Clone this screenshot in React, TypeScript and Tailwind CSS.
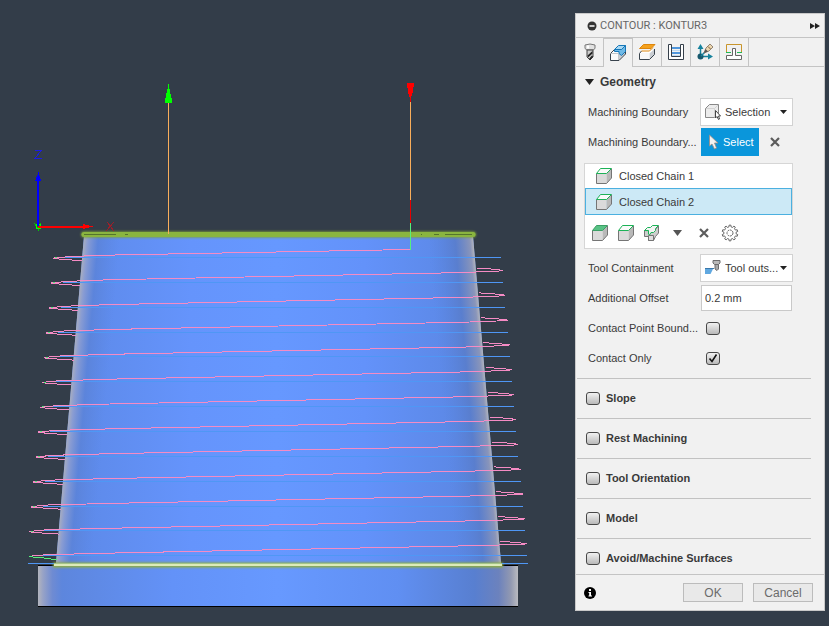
import { useState, type ReactNode } from "react"
import clsx from "clsx"

/* ---------- viewport ---------- */

const PASS_TIPS = [53, 51, 49, 46, 44, 42, 40, 38, 36, 33, 31, 29, 29]
const PASS_STEP = 24.85

const wallLeft = (y: number) => 84 - ((y - 236) * 28) / 326
const wallRight = (y: number) => 473 + ((y - 236) * 28) / 326

function Pass({ index, tip }: { index: number; tip: number }) {
  const y = 257.5 + index * PASS_STEP
  const right = 501 + index * 2.17
  const first = index === 0
  const last = index === PASS_TIPS.length - 1
  const across = first
    ? `M${tip} ${y + 0.6} L${tip + 17} ${y - 1} L110 ${y - 2.4} L410 249.5`
    : `M${tip} ${y + 0.6} L${tip + 17} ${y - 1} L110 ${y - 2.6} L463 ${y - 9.8} L${right - 4} ${y - 11.3} L${right} ${y - 12} L${right - 10} ${y - 13.2} L${wallRight(y)} ${y - 14.3}`
  return (
    <g fill="none" strokeWidth="1">
      <path d={`M${tip + 12} ${y} H${right}`} stroke="#4f97f5" />
      <path d={across} stroke="#f58bc4" />
      <path
        d={`M${tip} ${y + 1} L${tip + 14} ${y + 2.2} L${wallLeft(y)} ${y + (last ? 4 : 3.2)}`}
        stroke={last ? "#56f07c" : "#f58bc4"}
      />
      <path d={`M${tip + 2} ${y + 0.3} h2`} stroke="#56f07c" />
    </g>
  )
}

function Viewport() {
  return (
    <svg viewBox="0 0 575 626" className="block w-full" role="img" aria-label="Toolpath preview">
      <defs>
        <linearGradient id="body" gradientUnits="userSpaceOnUse" x1="60" y1="0" x2="495" y2="0">
          <stop offset="0" stopColor="#5c88e6" />
          <stop offset=".3" stopColor="#6594fc" />
          <stop offset=".5" stopColor="#6698ff" />
          <stop offset=".7" stopColor="#6392fa" />
          <stop offset="1" stopColor="#5984dd" />
        </linearGradient>
        <linearGradient id="edgeLeft" gradientUnits="userSpaceOnUse" x1="84" y1="236" x2="120" y2="239.1">
          <stop offset="0" stopColor="#a9aebf" />
          <stop offset=".12" stopColor="#8e9ed0" stopOpacity=".9" />
          <stop offset=".4" stopColor="#5b82d6" stopOpacity=".75" />
          <stop offset="1" stopColor="#5b86e0" stopOpacity="0" />
        </linearGradient>
        <linearGradient id="edgeRight" gradientUnits="userSpaceOnUse" x1="473" y1="236" x2="428" y2="239.9">
          <stop offset="0" stopColor="#b4b6bd" />
          <stop offset=".08" stopColor="#8c96b8" stopOpacity=".95" />
          <stop offset=".4" stopColor="#597cc9" stopOpacity=".8" />
          <stop offset="1" stopColor="#5984dd" stopOpacity="0" />
        </linearGradient>
        <linearGradient id="base" gradientUnits="userSpaceOnUse" x1="38" y1="0" x2="518" y2="0">
          <stop offset="0" stopColor="#b3b5bd" />
          <stop offset=".01" stopColor="#98a3c6" />
          <stop offset=".03" stopColor="#6f8bd2" />
          <stop offset=".05" stopColor="#5d86dd" />
          <stop offset=".28" stopColor="#6392f8" />
          <stop offset=".5" stopColor="#6799ff" />
          <stop offset=".75" stopColor="#608ff2" />
          <stop offset=".91" stopColor="#587fd0" />
          <stop offset=".96" stopColor="#6c82bd" />
          <stop offset=".985" stopColor="#9299b1" />
          <stop offset="1" stopColor="#babbc0" />
        </linearGradient>
        {/* user space units, a flat line has an empty bounding box */}
        <filter id="glow" filterUnits="userSpaceOnUse" x="20" y="220" width="520" height="360">
          <feGaussianBlur stdDeviation="1" />
        </filter>
      </defs>

      <rect x="38" y="566" width="480" height="40" fill="url(#base)" />
      <path d="M38 565.5 H518 M38 606.5 H518" stroke="#000" shapeRendering="crispEdges" />

      <g>
        <path d="M84 236 H473 L501 563 H56 Z" fill="url(#body)" />
        <path d="M84 236 H473 L501 563 H56 Z" fill="url(#edgeLeft)" />
        <path d="M84 236 H473 L501 563 H56 Z" fill="url(#edgeRight)" />
      </g>

      <g shapeRendering="crispEdges">
        {PASS_TIPS.map((tip, i) => (
          <Pass key={i} index={i} tip={tip} />
        ))}
      </g>

      {/* selected chains */}
      <path d="M84 234.5 H473" stroke="#7c9f3a" strokeWidth="6" strokeLinecap="round" filter="url(#glow)" />
      <path d="M84 234.5 H473" stroke="#8ab53f" strokeWidth="5" strokeLinecap="round" />
      <path
        d="M84 234.5 H116 M125 234.5 H128 M421 234.5 H422 M434 234.5 H439 M445 234.5 H472"
        stroke="#55742c"
        shapeRendering="crispEdges"
      />
      <path d="M53 565 H503" stroke="#8fae3c" strokeWidth="5" filter="url(#glow)" />
      <path d="M28 563.5 H528" stroke="#4f97f5" shapeRendering="crispEdges" />
      <path d="M54 563.5 H502" stroke="#a3c486" shapeRendering="crispEdges" />
      <path d="M54 565 H502" stroke="#dcebb8" strokeWidth="2" />

      {/* lead in and lead out */}
      <g shapeRendering="crispEdges">
        <path d="M168.5 102 V234" stroke="#f9ae5b" />
        <path d="M168.5 84 L172.5 103 H164.5 Z" fill="#0f0" />
        <path d="M410.5 101 V200" stroke="#f9ae5b" />
        <path d="M410.5 96 V102 M410.5 200 V223" stroke="#e80000" />
        <path d="M410.5 223 V250" stroke="#56f07c" />
        <path d="M407 83 H414 L413 92 L411 98 H410 L408 92 Z" fill="#f00" />
      </g>

      {/* origin triad */}
      <g shapeRendering="crispEdges" fill="none">
        <path d="M34 223 L38 228 M41 223 L38 228 V231" stroke="#0c0" />
        <rect x="36.500" y="224.500" width="4" height="4" stroke="#0f0" />
        <path d="M38 227 H86" stroke="red" strokeWidth="2" />
        <path d="M83 224 L93 226.500 L83 229 Z" fill="red" />
        <path d="M38 178 V226" stroke="#00f" strokeWidth="2" />
        <path d="M38.500 172 L41 181 H35 Z" fill="#00f" />
        <path d="M35 150.500 H41 L35 158.500 H42" stroke="#1c1ce0" />
        <path d="M107 222 L114 231 M114 222 L106 231" stroke="#9c1f29" />
      </g>
    </svg>
  )
}

/* ---------- icons ---------- */

function ToolIcon() {
  return (
    <svg width="16" height="20" viewBox="0 0 16 20" aria-hidden>
      <path d="M3 3 Q8 1 13 3 V6.500 L11 8 H5 L3 6.500 Z" fill="#e2e2e2" stroke="#777" />
      <path d="M5 8 H11 V15 L8 18 L5 15 Z" fill="#ccc" stroke="#444" />
      <path d="M5.500 13.500 L10.500 9 V11.500 L6 15.500 Z" fill="#222" />
      <path d="M7.500 17.500 L10.500 14" stroke="#222" strokeWidth="1.500" />
      <path d="M6 3.500 V6.500" stroke="#fff" strokeWidth="2" />
    </svg>
  )
}

function GeometryIcon() {
  return (
    <svg width="18" height="18" viewBox="0 0 18 18" aria-hidden>
      <path d="M1.500 9.500 L5.500 5.500 H12 V9.500 L9.500 16.500 H1.500 Z" fill="#fafafa" />
      <path d="M9.500 16.500 V10 L13 9 L16.500 5 V10 Z" fill="#c9cdd2" />
      <path d="M1.500 9.500 L5.500 5.500 M1.500 9.500 V16.500 H10 L16.500 10 V2" fill="none" stroke="#39434d" />
      <path d="M1.500 9.500 H9.500 V16" fill="none" stroke="#c2c6ca" />
      <path d="M5.500 5.500 L9.500 1.500 H16.500 L12.500 5.500 Z" fill="#a9d8f3" stroke="#1677b8" />
      <path d="M12.500 5.500 L16.500 1.500 V7.500 L12.500 11.500 L10 9.500 V7.500 H5.500 V5.500 Z" fill="#6fb9e6" stroke="#1677b8" />
    </svg>
  )
}

function HeightsIcon() {
  return (
    <svg width="18" height="18" viewBox="0 0 18 18" aria-hidden>
      <path d="M1.500 10.500 L5 7 H16.500 L11.500 10.500 Z" fill="#fff" />
      <path d="M11.500 16.500 V10.500 L16.500 6 V11.500 Z" fill="#c9cdd2" />
      <path d="M1.500 10.500 H11.500 V16.500 H1.500 Z" fill="#f8f8f8" />
      <path d="M3.500 8 L1.500 10.500 V16.500 H11.500 L16.500 11.500 V6" fill="none" stroke="#39434d" />
      <path d="M5.500 1.500 H17 L13 5.500 H1.500 Z" fill="#f5a11d" stroke="#dd860c" />
      <path d="M3.500 8 H11.500 L15 4.500" fill="none" stroke="#dd860c" />
    </svg>
  )
}

function PassesIcon() {
  return (
    <svg width="18" height="18" viewBox="0 0 18 18" aria-hidden>
      <path d="M1.500 1.500 H4.500 V13.500 H13.500 V1.500 H16.500 V16.500 H1.500 Z" fill="#fff" stroke="#353f4a" />
      <path d="M5 5 H13 M5 10 H13" stroke="#4f96dc" strokeWidth="2" />
      <path d="M5 7.500 H13 M5 12.500 H13" stroke="#bcd9f3" />
    </svg>
  )
}

function LinkingIcon() {
  return (
    <svg width="18" height="18" viewBox="0 0 18 18" aria-hidden>
      <path d="M4.500 5 V13.500 H13" fill="none" stroke="#16829d" strokeWidth="1.500" />
      <path d="M4.500 1 L7.500 6 H1.500 Z M17 13.500 L12 10.500 V16.500 Z" fill="#16829d" />
      <circle cx="4.500" cy="13.500" r="3" fill="#16586d" />
      <path d="M5 13 L10 8" stroke="#16829d" strokeWidth="1.500" />
      <path d="M8 10 L10 5 L14 1 L17 4 L13 8 Z" fill="#ecd6b0" stroke="#7b6c58" strokeWidth=".8" />
      <path d="M8 10 L9.500 6 L12 8.500 Z" fill="#555" />
      <path d="M12 3.500 L14.500 6" stroke="#7a5c35" />
    </svg>
  )
}

function ContainmentIcon() {
  return (
    <svg width="18" height="18" viewBox="0 0 18 18" fill="none" aria-hidden>
      <path d="M1.500 9 V1.500 H16.500 V9" stroke="#c8952c" />
      <path d="M1 9.500 H6 M12 9.500 H17" stroke="#1fb955" />
      <path d="M7.500 5.500 H10.500 V12.500 H16.500 V16.500 H1.500 V12.500 H7.500 Z" fill="#fff" stroke="#666" />
    </svg>
  )
}

function ChainIcon({ filled = false }: { filled?: boolean }) {
  return (
    <svg width="18" height="18" viewBox="0 0 18 18" className="shrink-0" aria-hidden>
      <path d="M1.500 6.500 H11.500 V16.500 H1.500 Z" fill="#dadada" />
      <path d="M11.500 6.500 L16.500 1.500 V11 L11.500 16.500 Z" fill="#b9b9b9" />
      <path d="M1.500 6.500 V16.500 H11.500 L16.500 11 V2" fill="none" stroke="#757575" />
      <path
        d="M1.500 6.500 L5.500 1.500 H16.500 L11.500 6.500 Z"
        fill={filled ? "#58c285" : "#fafafa"}
        stroke={filled ? "#3c9f66" : "#1cb257"}
      />
    </svg>
  )
}

function LoopIcon() {
  return (
    <svg width="18" height="18" viewBox="0 0 18 18" aria-hidden>
      <path d="M1.500 6.500 V12.500 H5.500 V16.500 H10.500 L12.500 12.500 L15.500 9 V2 L11 7 Z" fill="#cecece" stroke="#757575" />
      <path d="M5.500 11.500 H10.500 V16.500 H5.500 Z" fill="#dedede" stroke="#757575" />
      <path
        d="M1.500 6.500 L4.500 3.500 H7.500 L9.500 1.500 H15.500 L12.500 4.500 V6.500 L10.500 8.500 H8 L6.500 11 L5.500 10 V6.500 Z"
        fill="#f4f4f4"
        stroke="#1cb257"
      />
    </svg>
  )
}

function SelectionIcon() {
  return (
    <svg width="18" height="18" viewBox="0 0 18 18" className="shrink-0" aria-hidden>
      <path d="M1.500 5.500 L5.500 1.500 H14.500 V10 L10.500 14.500 H1.500 Z" fill="#ececec" stroke="#888" />
      <path d="M2 5.500 H10.500 L14 2 M10.500 5.500 V14" fill="none" stroke="#d2d2d2" />
      <path d="M11.500 7.500 V15 L13 13.500 L14.500 16.500 L15.500 16 L14.500 13 H16.500 Z" fill="#fff" stroke="#444" />
    </svg>
  )
}

function ToolOutsideIcon() {
  return (
    <svg width="18" height="18" viewBox="0 0 18 18" className="shrink-0" aria-hidden>
      <path d="M1 9 H9.500 L6.500 15 H1 Z" fill="#60a8e0" />
      <path d="M1 9.500 H10" stroke="#3b78aa" />
      <path d="M9 1.500 H16 V4 L14.500 5.500 H10.500 L9 4 Z" fill="#b9b9b9" stroke="#6d6d6d" />
      <path d="M11 5.500 H14.500 V10 L13 11.500 L11 10 Z" fill="#a9a9a9" stroke="#6d6d6d" />
    </svg>
  )
}

function CursorIcon() {
  return (
    <svg width="10" height="16" viewBox="0 0 10 16" aria-hidden>
      <path d="M.5 1 V12 L3 10 L5.500 15 L7.500 14 L5.500 9 H9 Z" fill="#f2f2f2" stroke="#a08c80" strokeWidth=".8" />
    </svg>
  )
}

function CrossIcon() {
  return (
    <svg width="10" height="10" viewBox="0 0 10 10" aria-hidden>
      <path d="M1 1 L9 9 M9 1 L1 9" stroke="#5c5c5c" strokeWidth="2.200" />
    </svg>
  )
}

function Caret({ large = false, className = "text-[#222]" }: { large?: boolean; className?: string }) {
  return (
    <svg
      width={large ? 9 : 7}
      height={large ? 6 : 4}
      viewBox="0 0 8 5"
      preserveAspectRatio="none"
      fill="currentColor"
      className={clsx("pointer-events-none shrink-0", className)}
      aria-hidden
    >
      <path d="M0 0 H8 L4 5 Z" />
    </svg>
  )
}

function GearIcon() {
  const points: string[] = []
  const teeth = 10
  for (let i = 0; i < teeth; i++) {
    const steps = [[-0.28, 6.2], [-0.18, 7.9], [0.18, 7.9], [0.28, 6.2]]
    for (const [offset, r] of steps) {
      const a = ((i + offset) / teeth) * Math.PI * 2
      points.push(`${(9 + r * Math.sin(a)).toFixed(2)},${(9 - r * Math.cos(a)).toFixed(2)}`)
    }
  }
  return (
    <svg width="18" height="18" viewBox="0 0 18 18" fill="none" stroke="#666" aria-hidden>
      <polygon points={points.join(" ")} strokeLinejoin="round" />
      <circle cx="9" cy="9" r="3" strokeDasharray="2 .7" />
    </svg>
  )
}

/* ---------- form parts ---------- */

function Tick({ id, defaultChecked }: { id: string; defaultChecked?: boolean }) {
  return (
    <span className="grid shrink-0 place-items-center">
      <input
        id={id}
        type="checkbox"
        defaultChecked={defaultChecked}
        className="peer col-start-1 row-start-1 h-[13px] w-[14px] appearance-none rounded-[3px] border border-[#484848] bg-linear-to-b from-[#f2f2f2] to-[#b9b9b9]"
      />
      <svg
        width="12"
        height="12"
        viewBox="0 0 12 12"
        className="pointer-events-none invisible col-start-1 row-start-1 peer-checked:visible"
        aria-hidden
      >
        <path d="M2.500 6.500 L5 9.500 L9.500 2.500" fill="none" stroke="#111" strokeWidth="1.600" />
      </svg>
    </span>
  )
}

function Row({ label, htmlFor, children }: { label: string; htmlFor: string; children: ReactNode }) {
  return (
    <div className="flex h-[30px] items-center pl-3">
      <label htmlFor={htmlFor} className="w-28 shrink-0 whitespace-nowrap">
        {label}
      </label>
      {children}
    </div>
  )
}

function Dropdown({ id, icon, value }: { id: string; icon: ReactNode; value: string }) {
  return (
    <div className="flex h-7 w-[93px] items-center border border-[#d2d2d2] bg-white pr-[5px] pl-[3px]">
      {icon}
      <select id={id} className="ml-[3px] min-w-0 flex-1 appearance-none bg-transparent text-[11px] whitespace-nowrap">
        <option>{value}</option>
      </select>
      <Caret />
    </div>
  )
}

const TABS = [
  { name: "Tool", icon: <ToolIcon /> },
  { name: "Geometry", icon: <GeometryIcon /> },
  { name: "Heights", icon: <HeightsIcon /> },
  { name: "Passes", icon: <PassesIcon /> },
  { name: "Linking", icon: <LinkingIcon /> },
  { name: "Containment", icon: <ContainmentIcon /> },
]

const SECTIONS = ["Slope", "Rest Machining", "Tool Orientation", "Model", "Avoid/Machine Surfaces"]

function ContourPanel() {
  const [tab, setTab] = useState("Geometry")
  const [chain, setChain] = useState(2)

  return (
    <aside className="mt-[13px] mr-1 w-[250px] shrink-0 border border-[#c9c9c9] bg-[#f1f1f1] text-[11px] leading-4 text-[#3a3a3a]">
      <header className="flex h-6 items-center border-b border-[#c4c4c4] pr-1 pl-[11px]">
        <button aria-label="Collapse">
          <svg width="10" height="10" viewBox="0 0 10 10" className="block" aria-hidden>
            <circle cx="5" cy="5" r="4.500" fill="#333" />
            <path d="M2.500 5 H7.500" stroke="#fff" strokeWidth="1.500" />
          </svg>
        </button>
        <h1 className="ml-[3px] flex-1 font-[Roboto,sans-serif] text-[#666]">CONTOUR : KONTUR3</h1>
        <button aria-label="Dock">
          <svg width="10" height="6" viewBox="0 0 10 6" className="block" aria-hidden>
            <path d="M0 0 L5 3 L0 6 Z M5 0 L10 3 L5 6 Z" fill="#222" />
          </svg>
        </button>
      </header>

      <nav className="flex h-[29px] border-b border-[#c4c4c4]">
        {TABS.map(({ name, icon }, i) => (
          <button
            key={name}
            aria-label={name}
            onClick={() => setTab(name)}
            className={clsx(
              "flex items-center justify-center border-r border-[#c4c4c4]",
              i === 0 ? "w-7" : "w-[29px]",
              tab === name && "-mb-px border-t bg-[#f1f1f1]",
            )}
          >
            {icon}
          </button>
        ))}
      </nav>

      <h2 className="flex h-[30px] items-center gap-[6px] pl-[9px] text-[12px] font-bold">
        <Caret large />
        Geometry
      </h2>

      <Row label="Machining Boundary" htmlFor="boundary">
        <Dropdown id="boundary" icon={<SelectionIcon />} value="Selection" />
      </Row>
      <Row label="Machining Boundary..." htmlFor="boundary-select">
        <button id="boundary-select" className="ml-px flex h-7 w-[58px] items-center gap-1 bg-[#0a96db] pl-2 text-white">
          <CursorIcon />
          Select
        </button>
        <button aria-label="Clear selection" className="ml-[11px]">
          <CrossIcon />
        </button>
      </Row>

      <div className="mt-[6px] ml-2 w-[209px] border border-[#d6d6d6] bg-white">
        {[1, 2].map((n) => (
          <button
            key={n}
            onClick={() => setChain(n)}
            className={clsx(
              "flex w-full items-center gap-[6px] border pl-[9px]",
              chain === n ? "h-[27px] border-[#4bb0e0] bg-[#cce9f6]" : "h-6 border-transparent",
            )}
          >
            <ChainIcon />
            Closed Chain {n}
          </button>
        ))}
        <div className="flex h-[33px] items-center gap-2 pt-[2px] pl-[6px]">
          <button aria-label="Face loops"><ChainIcon filled /></button>
          <button aria-label="Edge loops"><ChainIcon /></button>
          <button aria-label="Silhouette"><LoopIcon /></button>
          <button aria-label="More" className="flex w-[17px] justify-center"><Caret large className="text-[#555]" /></button>
          <button aria-label="Remove chain" className="flex w-[19px] justify-center"><CrossIcon /></button>
          <button aria-label="Chain settings"><GearIcon /></button>
        </div>
      </div>

      <div className="mt-1 mb-[5px]">
        <Row label="Tool Containment" htmlFor="containment">
          <Dropdown id="containment" icon={<ToolOutsideIcon />} value="Tool outs..." />
        </Row>
        <Row label="Additional Offset" htmlFor="offset">
          <input id="offset" defaultValue="0.2 mm" className="ml-px h-[26px] w-[91px] border border-[#c9c9c9] bg-white px-[3px]" />
        </Row>
        <Row label="Contact Point Bound..." htmlFor="contact-point">
          <span className="ml-[6px]"><Tick id="contact-point" /></span>
        </Row>
        <Row label="Contact Only" htmlFor="contact-only">
          <span className="ml-[6px]"><Tick id="contact-only" defaultChecked /></span>
        </Row>
      </div>

      {SECTIONS.map((name) => (
        <section
          key={name}
          className="mr-[13px] ml-px flex items-center gap-[6px] border-t border-[#c2c2c2] pt-[11px] pb-3 pl-[9px] last-of-type:pb-2"
        >
          <Tick id={name} />
          <label htmlFor={name} className="font-bold">{name}</label>
        </section>
      ))}

      <footer className="flex items-center gap-[10px] border-t border-[#c4c4c4] py-2 pr-[11px] pl-2">
        <button aria-label="Info" className="mr-auto">
          <svg width="12" height="12" viewBox="0 0 12 12" className="block" aria-hidden>
            <circle cx="6" cy="6" r="6" fill="#000" />
            <path d="M5 2 H7 V4 H5 Z M4.500 5 H7 V8.500 H8 V9.500 H4.500 V8.500 H5.200 V6 H4.500 Z" fill="#fff" />
          </svg>
        </button>
        <button className="h-[19px] w-[60px] border border-[#bcbcbc] bg-[#e9e9e9] text-[12px] text-[#6b6b6b]">OK</button>
        <button className="h-[19px] w-[60px] border border-[#bcbcbc] bg-[#e9e9e9] text-[12px] text-[#6b6b6b]">Cancel</button>
      </footer>
    </aside>
  )
}

export default function App() {
  return (
    <main className="flex min-h-screen items-start bg-[#333d49] font-['Liberation_Sans',Arial,sans-serif]">
      <div className="min-w-0 flex-1">
        <Viewport />
      </div>
      <ContourPanel />
    </main>
  )
}
